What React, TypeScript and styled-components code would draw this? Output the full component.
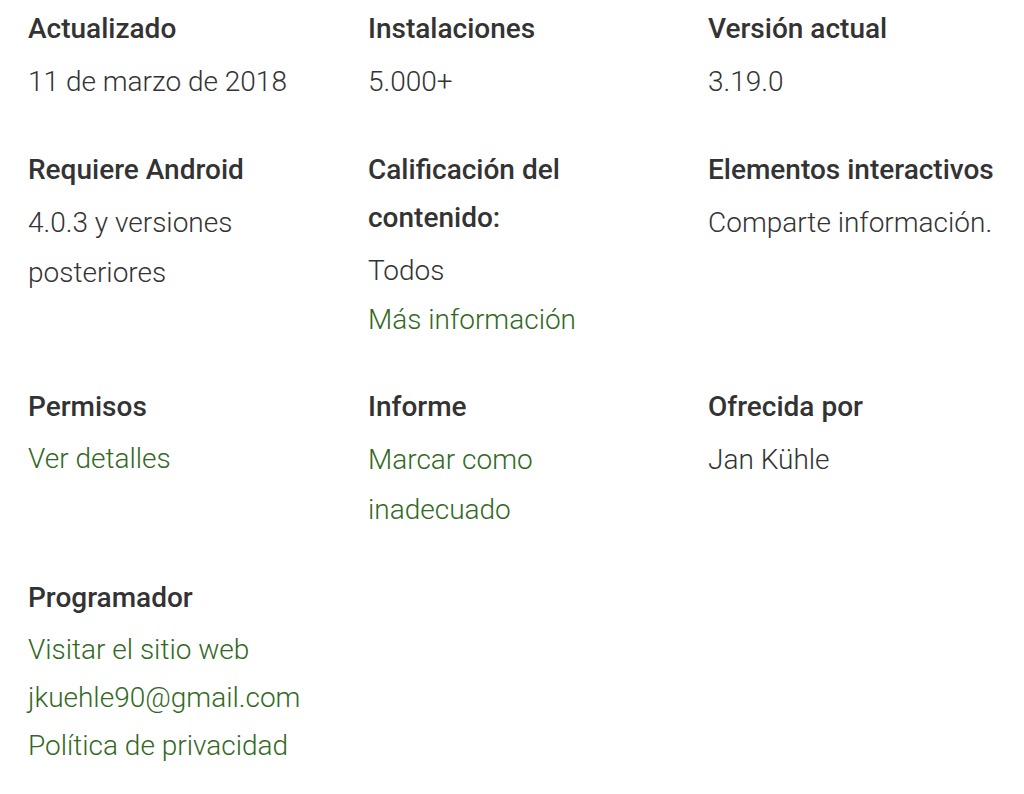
import React from 'react';
import styled, { createGlobalStyle } from 'styled-components';

const GlobalStyle = createGlobalStyle`
  html, body {
    margin: 0;
    padding: 0;
    background: #fff;
  }
  body {
    font-family: Roboto, 'Liberation Sans', Arial, sans-serif;
  }
`;

const Grid = styled.div`
  display: grid;
  grid-template-columns: repeat(3, 300px);
  column-gap: 40px;
  row-gap: 39px;
  padding: 5px 0 0 28px;
  align-items: start;
`;

const Cell = styled.div`
  display: flex;
  flex-direction: column;
`;

const Title = styled.div`
  font-size: 28px;
  font-weight: 500;
  line-height: 48px;
  color: #333;
  margin-bottom: 4px;
`;

const Value = styled.div`
  font-size: 28px;
  font-weight: 300;
  line-height: 50px;
  color: #333;
`;

const Link = styled.a<{ $wrap?: boolean }>`
  display: block;
  font-size: 28px;
  font-weight: 300;
  line-height: ${(p) => (p.$wrap ? '50px' : '48px')};
  color: #33691e;
  text-decoration: none;
  cursor: pointer;
`;

type Entry = {
  title: string;
  values?: string[];
  links?: string[];
  wrapLinks?: boolean;
};

const entries: Entry[] = [
  { title: 'Actualizado', values: ['11 de marzo de 2018'] },
  { title: 'Instalaciones', values: ['5.000+'] },
  { title: 'Versión actual', values: ['3.19.0'] },
  { title: 'Requiere Android', values: ['4.0.3 y versiones posteriores'] },
  { title: 'Calificación del contenido:', values: ['Todos'], links: ['Más información'] },
  { title: 'Elementos interactivos', values: ['Comparte información.'] },
  { title: 'Permisos', links: ['Ver detalles'] },
  { title: 'Informe', links: ['Marcar como inadecuado'], wrapLinks: true },
  { title: 'Ofrecida por', values: ['Jan Kühle'] },
  {
    title: 'Programador',
    links: ['Visitar el sitio web', 'jkuehle90@gmail.com', 'Política de privacidad'],
  },
];

const App = () => (
  <>
    <GlobalStyle />
    <Grid>
      {entries.map((e) => (
        <Cell key={e.title}>
          <Title>{e.title}</Title>
          {e.values?.map((v) => (
            <Value key={v}>{v}</Value>
          ))}
          {e.links?.map((l) => (
            <Link key={l} $wrap={e.wrapLinks}>
              {l}
            </Link>
          ))}
        </Cell>
      ))}
    </Grid>
  </>
);

export default App;
